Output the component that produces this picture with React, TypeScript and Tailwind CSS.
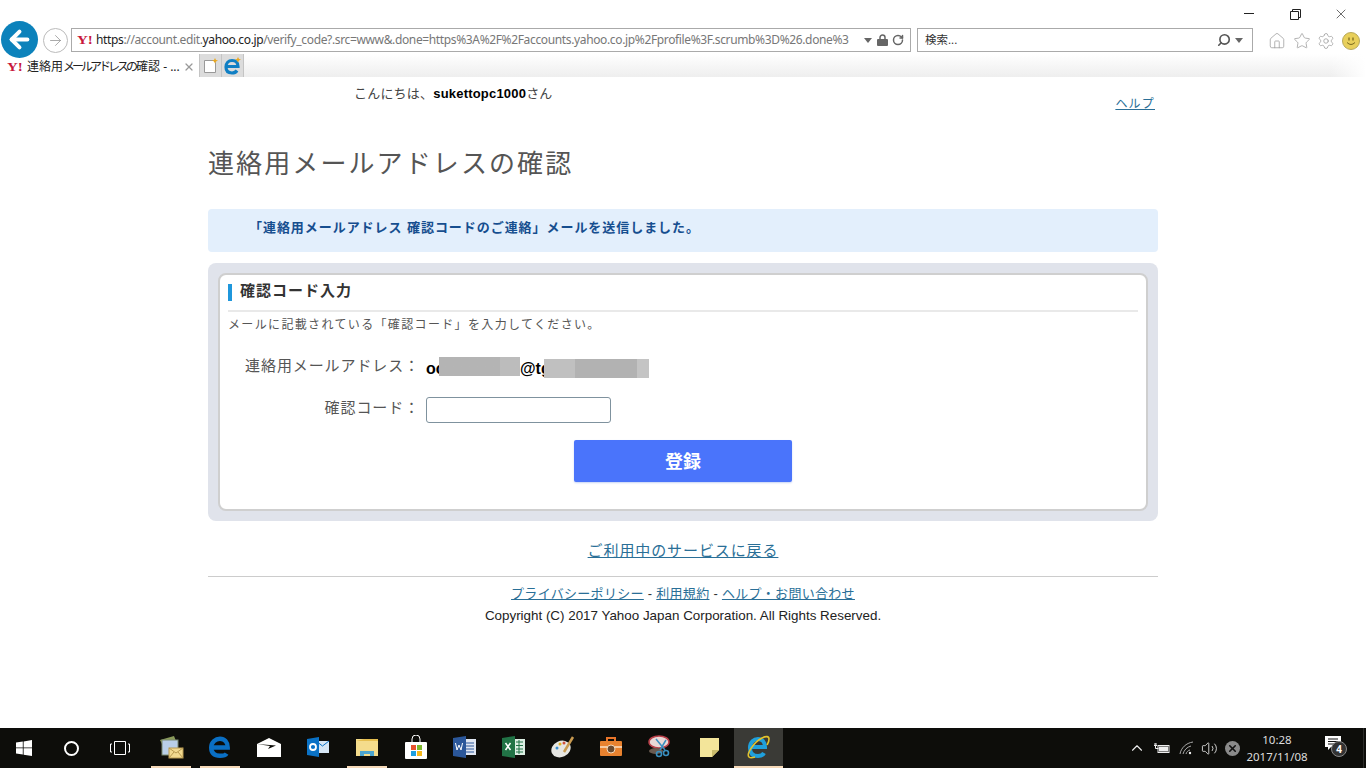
import { ArrowLeft, ArrowRight, ChevronUp, Home, RotateCw, Search, Settings, Star, Volume2, X } from 'lucide-react';

const jp = "font-['Liberation_Sans','Noto_Sans_CJK_JP',sans-serif]";
const ui = "font-['Noto_Sans','Noto_Sans_CJK_JP',sans-serif]";

function YahooMark() {
    return <span className="font-['Liberation_Serif',serif] text-[12px] leading-none font-bold text-[#c8173c] w-[16px] shrink-0 scale-x-125 origin-left">Y!</span>;
}

function Caret() {
    return (
        <svg width="8" height="5" viewBox="0 0 8 5" fill="#666" className="shrink-0"><path d="M0 0h8L4 5z" /></svg>
    );
}

function BrowserChrome() {
    return (
        <div className={`h-[77px] shrink-0 flex flex-col ${ui}`}>
            <div className="h-[27px] flex justify-end text-[#222] pr-[2px] pt-[1px]">
                <div className="w-[46px] flex items-center justify-center pb-[1px]"><div className="w-[10px] h-[1px] bg-[#222]" /></div>
                <div className="w-[46px] flex items-center justify-center">
                    <svg width="11" height="11" viewBox="0 0 11 11" fill="none" stroke="#222"><path d="M.5 2.500h8v8h-8zM2.500 2.500v-2h8v8h-2" /></svg>
                </div>
                <div className="w-[46px] flex items-center justify-center"><X size={16} strokeWidth={1} /></div>
            </div>

            <div className="h-[27px] flex items-center">
                <div className="ml-[1px] -mt-[2px] w-[37px] h-[37px] rounded-full bg-[#0c82bb] flex items-center justify-center shrink-0 z-10">
                    <ArrowLeft size={27} strokeWidth={3.5} color="#fff" />
                </div>
                <div className="ml-[5px] w-[25px] h-[25px] rounded-full border border-[#bbb] flex items-center justify-center shrink-0">
                    <ArrowRight size={17} strokeWidth={1} color="#888" />
                </div>
                <div className="ml-[3px] w-[840px] h-[24px] border border-[#aaa] flex items-center pl-[5px] shrink-0 mb-[1px]">
                    <YahooMark />
                    <div className="ml-[3px] w-[762px] whitespace-nowrap text-[12px] tracking-[-0.36px] text-[#777]">
                        <span className="text-[#222]">https</span>://account.edit.<span className="text-[#222]">yahoo.co.jp</span>/verify_code?.src=www&amp;.done=https%3A%2F%2Faccounts.yahoo.co.jp%2Fprofile%3F.scrumb%3D%26.done%3
                    </div>
                    <span className="ml-[6px]"><Caret /></span>
                    <svg width="11" height="12" viewBox="0 0 11 12" className="ml-[5px] shrink-0" fill="#666">
                        <path d="M3 6V3.500a2.500 2.500 0 015 0V6" fill="none" stroke="#666" strokeWidth="1.500" />
                        <rect x="0" y="5" width="11" height="7" rx="1" />
                    </svg>
                    <RotateCw size={12} strokeWidth={3} color="#666" className="ml-[4px] shrink-0" />
                </div>
                <div className="ml-[6px] w-[336px] h-[24px] border border-[#aaa] flex items-center pl-[7px] pr-[9px] shrink-0 mb-[1px]">
                    <span className="text-[11.5px] text-[#333] flex-1">検索...</span>
                    <Search size={14} strokeWidth={2.8} color="#555" className="-scale-x-100" />
                    <span className="ml-[4px]"><Caret /></span>
                </div>
                <div className="ml-[15px] flex items-center gap-[6.500px] text-[#9a9a9a]">
                    <Home size={18} strokeWidth={1} />
                    <Star size={18} strokeWidth={1} />
                    <Settings size={18} strokeWidth={1} />
                    <svg width="18" height="18" viewBox="0 0 18 18">
                        <circle cx="9" cy="9" r="8.500" fill="#e8cf5a" stroke="#b8a95a" />
                        <path d="M7 5.500v3M11 5.500v3" stroke="#7b6b20" strokeWidth="1.300" />
                        <path d="M5 10.500q4 4 8 0" stroke="#7b6b20" fill="none" />
                    </svg>
                </div>
            </div>

            <div className="h-[23px] flex bg-gradient-to-b from-white to-[#eeeeee]">
                <div className="w-[199px] bg-white flex items-center pl-[7px] pt-[2px] text-[#222]">
                    <YahooMark />
                    <span className="ml-[4px] w-[151px] text-[12px] whitespace-nowrap">
                        連絡用<span className="tracking-[-3px]">メールアドレス</span><span className="tracking-[-2px]">の</span>確認 - ...
                    </span>
                    <X size={12} strokeWidth={2.500} color="#999" className="ml-[5px]" />
                </div>
                <div className="w-[23px] bg-[#dcdcdc] border-x border-[#c4c4c4] flex items-center justify-center">
                    <svg width="16" height="17" viewBox="0 0 16 17">
                        <path d="M1.500 3.500h9l2 2v10h-11z" fill="#fff" stroke="#999" />
                        <path d="M12 1l1 2 2 .5-2 1-1 2-1-2-2-1 2-.5z" fill="#e9a820" />
                    </svg>
                </div>
                <div className="w-[22px] bg-[#dcdcdc] border-r border-[#c4c4c4] flex items-center justify-center">
                    <svg width="19" height="19" viewBox="0 0 19 19" fill="none">
                        <path d="M3 10.500h12c0-4-2.500-6-6-6s-6 2.500-6 6.500 2.500 6 6 6c2.500 0 4-1 5-2.500" stroke="#0f7fc4" strokeWidth="3.200" />
                        <path d="M15 1l1 2 2 .5-2 1-1 2-1-2-2-1 2-.5z" fill="#e9a820" />
                    </svg>
                </div>
                <div className="flex-1 flex justify-end">
                    <div className="w-[36px] h-full bg-gradient-to-r from-transparent to-white" />
                </div>
            </div>
        </div>
    );
}

function IeLogo({ size }: { size: number }) {
    return (
        <svg width={size} height={size} viewBox="0 0 26 26" fill="none">
            <path d="M5 13h15c0-5-3-8-7-8s-8 3-8 9 3 8 8 8c3 0 5-1 6-3" stroke="#1fa0dc" strokeWidth="4" />
            <path d="M4 23C1 20 9 8 17 4c4-2 7-2 7 1s-1 4-2 6M4 23c1 1 3 1 6 0" stroke="#e3c22c" strokeWidth="1.600" />
        </svg>
    );
}

function TaskIcon({ children, mark, active }: { children: React.ReactNode; mark?: boolean; active?: boolean }) {
    return (
        <div className={`w-[48.900px] h-full flex flex-col items-center shrink-0 ${active ? 'bg-[#3a3a36]' : ''}`}>
            <div className="flex-1 flex items-center justify-center">{children}</div>
            <div className={`h-[2px] w-[40px] ${mark ? 'bg-[#f6d9b8]' : ''} ${active ? 'w-full bg-[#f6d9b8]' : ''}`} />
        </div>
    );
}

function Taskbar() {
    return (
        <div className={`h-[40px] shrink-0 bg-[#0d0d0a] flex items-center text-white ${ui}`}>
            <div className="w-[48px] flex justify-center">
                <svg width="16" height="16" viewBox="0 0 16 16" fill="#fff"><path d="M0 2.500l6.800-1v6H0zM7.600 1.400L16 0v7.500H7.600zM0 8.300h6.800v6.200L0 13.500zM7.600 8.300H16V16l-8.400-1.200z" /></svg>
            </div>
            <div className="w-[48px] flex justify-center pr-[1px]">
                <div className="w-[15px] h-[15px] rounded-full border-[2px] border-white" />
            </div>
            <div className="w-[48px] flex justify-center">
                <svg width="20" height="14" viewBox="0 0 20 14" fill="none" stroke="#fff"><path d="M4.500.5h11v13h-11zM2 3H.5v8H2M18 3h1.500v8H18" /></svg>
            </div>
            <div className="w-[3px]" />
            <TaskIcon mark>
                <svg width="26" height="24" viewBox="0 0 26 24">
                    <path d="M2 5l14-4 2 5-13 5z" fill="#8a9a5a" />
                    <rect x="4" y="5" width="16" height="15" fill="#b9cfe8" stroke="#7a8a70" />
                    <rect x="11" y="13" width="14" height="10" fill="#f1d98f" stroke="#b89a50" />
                    <path d="M11 13l7 5 7-5M11 23l5-6M25 23l-5-6" stroke="#b89a50" fill="none" />
                </svg>
            </TaskIcon>
            <TaskIcon mark>
                <svg width="22" height="22" viewBox="0 0 20 20" fill="none"><path d="M3 10.500h14c0-5-3-8-7-8s-8 3-8 8 3 7.500 8 7.500c2.500 0 5-.5 6-2" stroke="#0a6fc4" strokeWidth="4" /></svg>
            </TaskIcon>
            <TaskIcon>
                <svg width="24" height="19" viewBox="0 0 24 19">
                    <path d="M0 6L12 0l12 6v13H0z" fill="#fff" />
                    <path d="M0 6l19 1.500-8 3.500L13 8z" fill="#0d0d0a" />
                </svg>
            </TaskIcon>
            <TaskIcon>
                <svg width="22" height="20" viewBox="0 0 22 20">
                    <rect x="9" y="4" width="13" height="12" fill="#d6e6f5" />
                    <path d="M9 4l6.500 5L22 4" stroke="#0a72c6" fill="none" />
                    <path d="M0 2l12-2v20L0 18z" fill="#0a72c6" />
                    <circle cx="6" cy="10" r="3" fill="none" stroke="#fff" strokeWidth="1.800" />
                </svg>
            </TaskIcon>
            <TaskIcon mark>
                <svg width="22" height="19" viewBox="0 0 22 19">
                    <path d="M0 1h8l2 2h12v15H0z" fill="#f4dc8c" />
                    <path d="M0 3h22V1H8z" fill="#e6bf50" />
                    <path d="M4 18v-5h14v5h-4v-2H8v2z" fill="#4da5cf" />
                </svg>
            </TaskIcon>
            <TaskIcon>
                <svg width="24" height="24" viewBox="0 0 24 24">
                    <path d="M8 7V4a4 4 0 018 0v3" fill="none" stroke="#fff" />
                    <rect x="1" y="7" width="22" height="17" rx="1" fill="#fff" />
                    <rect x="7" y="10" width="5" height="5" fill="#e8532f" />
                    <rect x="13" y="10" width="5" height="5" fill="#7db82c" />
                    <rect x="7" y="16" width="5" height="5" fill="#1f9fe0" />
                    <rect x="13" y="16" width="5" height="5" fill="#f6b81c" />
                </svg>
            </TaskIcon>
            <TaskIcon>
                <svg width="23" height="22" viewBox="0 0 23 22">
                    <rect x="8" y="3" width="15" height="16" fill="#dfe6f2" />
                    <path d="M13 7h8M13 10h8M13 13h8M13 16h8" stroke="#2b579a" />
                    <path d="M0 2l13-2v22L0 20z" fill="#2b579a" />
                    <path d="M2.500 7l1.500 7 2-5 2 5 1.500-7" fill="none" stroke="#fff" />
                </svg>
            </TaskIcon>
            <TaskIcon>
                <svg width="23" height="22" viewBox="0 0 23 22">
                    <rect x="8" y="3" width="15" height="16" fill="#dbeee3" />
                    <path d="M14 6h7M14 9.500h7M14 13h7M14 16h7M17 4v14" stroke="#217346" />
                    <path d="M0 2l13-2v22L0 20z" fill="#217346" />
                    <path d="M3.500 7l5 7M8.500 7l-5 7" fill="none" stroke="#fff" strokeWidth="1.500" />
                </svg>
            </TaskIcon>
            <TaskIcon>
                <svg width="24" height="24" viewBox="0 0 24 24">
                    <ellipse cx="10" cy="14" rx="10" ry="8" fill="#e6e6e2" transform="rotate(-25 10 14)" />
                    <circle cx="6" cy="13" r="1.500" fill="#3a8fd0" />
                    <circle cx="9" cy="9" r="1.500" fill="#e0b020" />
                    <circle cx="13" cy="8" r="1.500" fill="#d0503a" />
                    <path d="M13 17L22 2" stroke="#c89a50" strokeWidth="2.500" />
                </svg>
            </TaskIcon>
            <TaskIcon>
                <svg width="22" height="20" viewBox="0 0 22 20">
                    <path d="M7 4V1h8v3" fill="none" stroke="#e8752a" strokeWidth="2" />
                    <rect x="0" y="4" width="22" height="15" rx="1" fill="#e8822f" />
                    <rect x="0" y="9" width="22" height="2" fill="#f6c9a0" />
                    <circle cx="11" cy="12" r="4" fill="#6a4a30" stroke="#f6d9b8" />
                </svg>
            </TaskIcon>
            <TaskIcon>
                <svg width="24" height="24" viewBox="0 0 24 24" fill="none">
                    <ellipse cx="11" cy="7" rx="10" ry="6" fill="#e9d8d6" stroke="#b9404a" strokeWidth="1.500" />
                    <ellipse cx="8" cy="16" rx="7" ry="3" fill="#6a5a50" />
                    <path d="M8 4l9 11M18 5l-6 10" stroke="#3a8fc0" strokeWidth="1.500" />
                    <circle cx="18" cy="18" r="2.500" stroke="#3a8fc0" strokeWidth="1.600" />
                    <circle cx="11" cy="19" r="2.500" stroke="#3a8fc0" strokeWidth="1.600" />
                </svg>
            </TaskIcon>
            <TaskIcon>
                <svg width="19" height="19" viewBox="0 0 19 19"><path d="M0 0h19v12l-7 7H0z" fill="#f3e59a" /><path d="M12 19v-7h7z" fill="#c9bb6a" /></svg>
            </TaskIcon>
            <TaskIcon active>
                <IeLogo size={26} />
            </TaskIcon>

            <div className="ml-auto flex items-center h-full">
                <ChevronUp size={18} strokeWidth={1.500} className="mr-[7px] text-[#eee]" />
                <svg width="17" height="12" viewBox="0 0 17 12" fill="none" stroke="#eee" className="mr-[9px]">
                    <rect x="5" y="3.500" width="11" height="7" />
                    <rect x="6.500" y="5" width="8" height="4" fill="#eee" />
                    <path d="M1 3.500h3M2 1v2.500M3 1v2.500M2.500 3.500v3h3" />
                </svg>
                <svg width="15" height="14" viewBox="0 0 15 14" fill="none" stroke="#aaa" className="mr-[7px]">
                    <path d="M1 13C2 7 7 2 14 1M4 13c1-4 4-7 8-8M7 13c.5-2 2-3.500 4-4" />
                    <circle cx="11" cy="12" r="1.200" fill="#eee" stroke="none" />
                </svg>
                <Volume2 size={17} strokeWidth={1.200} className="mr-[7px] text-[#eee]" />
                <div className="w-[15px] h-[15px] rounded-full bg-[#8a8a8a] flex items-center justify-center mr-[2px]">
                    <X size={11} strokeWidth={3.500} color="#111" />
                </div>
                <div className="w-[70px] text-center text-[11.500px] leading-[17px] text-[#ddd]">
                    <div>10:28</div>
                    <div>2017/11/08</div>
                </div>
                <div className="relative ml-[13px] mr-[20px] w-[18px] h-[18px] -mt-[6px]">
                    <svg width="16" height="15" viewBox="0 0 16 15"><path d="M0 0h16v11H6l-3 3v-3H0z" fill="#fff" /><path d="M3 3h10M3 5.500h10M3 8h10" stroke="#111" /></svg>
                    <div className="absolute left-[6px] top-[5px] w-[16px] h-[16px] rounded-full bg-[#333] border border-[#888] flex items-center justify-center text-[10px] font-bold leading-none">4</div>
                </div>
                <div className="w-[1px] h-full bg-[#2c2c2a] mr-[2px]" />
            </div>
        </div>
    );
}

export default function App() {
    return (
        <div className={`w-[1366px] h-[768px] flex flex-col overflow-hidden bg-white ${jp}`}>
            <BrowserChrome />

            <main className="flex-1 min-h-0">
                <div className="w-[950px] ml-[208px]">
                    <div className="h-[69px] flex justify-between">
                        <p className="ml-[146px] mt-[9px] text-[13px] leading-[16px] text-[#444] tracking-[0.200px]">
                            こんにちは、<span className="font-bold text-black">sukettopc1000</span>さん
                        </p>
                        <a className="mr-[3px] mt-[19px] text-[12px] leading-[16px] text-[#2a6f97] underline tracking-[1.200px]">ヘルプ</a>
                    </div>

                    <h1 className="h-[36px] text-[26px] leading-[36px] text-[#555] tracking-[2.100px] whitespace-nowrap">連絡用メールアドレスの確認</h1>

                    <div className="mt-[27px] h-[43px] bg-[#e3effc] rounded-[4px] pl-[41px] pb-[6px] flex items-center text-[13px] font-bold text-[#164e8f] tracking-[0.950px]">
                        「連絡用メールアドレス 確認コードのご連絡」メールを送信しました。
                    </div>

                    <section className="mt-[11px] h-[258px] bg-[#e0e3eb] rounded-[8px] p-[10px]">
                        <div className="h-[238px] bg-white border-2 border-[#cfcfcf] rounded-[8px] flex flex-col">
                            <div className="h-[35px] shrink-0 ml-[8px] flex items-center">
                                <div className="w-[4px] h-[17px] bg-[#1f97dc]" />
                                <h2 className="ml-[8px] -mt-[3px] text-[15px] font-bold text-[#333] tracking-[1px]">確認コード入力</h2>
                            </div>
                            <div className="mx-[8px] h-[2px] bg-[#e9e9e9] shrink-0" />
                            <p className="ml-[8px] mt-[5px] text-[12px] leading-[16px] text-[#555] tracking-[1.350px]">メールに記載されている「確認コード」を入力してください。</p>

                            <div className="mt-[23px] flex h-[22px]">
                                <span className="w-[200px] text-right text-[15px] leading-[20px] text-[#555] tracking-[0.900px]">連絡用メールアドレス：</span>
                                <span className="ml-[6px] flex items-start text-[16px] font-bold text-black">
                                    <span className="mt-[2px] leading-[22px]">oc</span>
                                    <span className="relative -ml-[5.700px] mt-[1px] w-[81px] h-[19px] bg-gradient-to-r from-[#b4b4b4] from-75% to-[#bcbcbc] to-75%" />
                                    <span className="mt-[2px] leading-[22px]">@tg</span>
                                    <span className="relative -ml-[6.700px] mt-[3px] w-[31px] h-[19px] bg-[#c0c0c0]" />
                                    <span className="mt-[3px] w-[62px] h-[19px] bg-[#b2b2b2]" />
                                    <span className="mt-[3px] w-[12px] h-[19px] bg-[#c4c4c4]" />
                                </span>
                            </div>

                            <div className="mt-[19px] flex h-[26px]">
                                <span className="w-[200px] text-right text-[15px] leading-[22px] text-[#555] tracking-[0.900px]">確認コード：</span>
                                <input className="ml-[6px] w-[185px] h-[26px] border border-[#7f929e] rounded-[3px] bg-white" />
                            </div>

                            <button className="mt-[17px] ml-[354px] w-[218px] h-[42px] pt-[2px] bg-[#4a74fb] rounded-[2px] text-white text-[18px] font-bold shadow-[0_1px_2px_#c7d4f5]">
                                登録
                            </button>
                        </div>
                    </section>

                    <div className="mt-[18px] h-[22px] text-center">
                        <a className="text-[15px] leading-[22px] text-[#2a6f97] underline tracking-[0.900px]">ご利用中のサービスに戻る</a>
                    </div>
                    <div className="mt-[15px] h-[1px] bg-[#cccccc]" />
                    <div className="mt-[8px] text-center text-[13px] leading-[18px] text-[#333] tracking-[0.300px]">
                        <a className="text-[#2a6f97] underline">プライバシーポリシー</a> - <a className="text-[#2a6f97] underline">利用規約</a> - <a className="text-[#2a6f97] underline">ヘルプ・お問い合わせ</a>
                    </div>
                    <p className="mt-[4px] text-center text-[13.400px] leading-[18px] text-[#222]">Copyright (C) 2017 Yahoo Japan Corporation. All Rights Reserved.</p>
                </div>
            </main>

            <Taskbar />
        </div>
    );
}
